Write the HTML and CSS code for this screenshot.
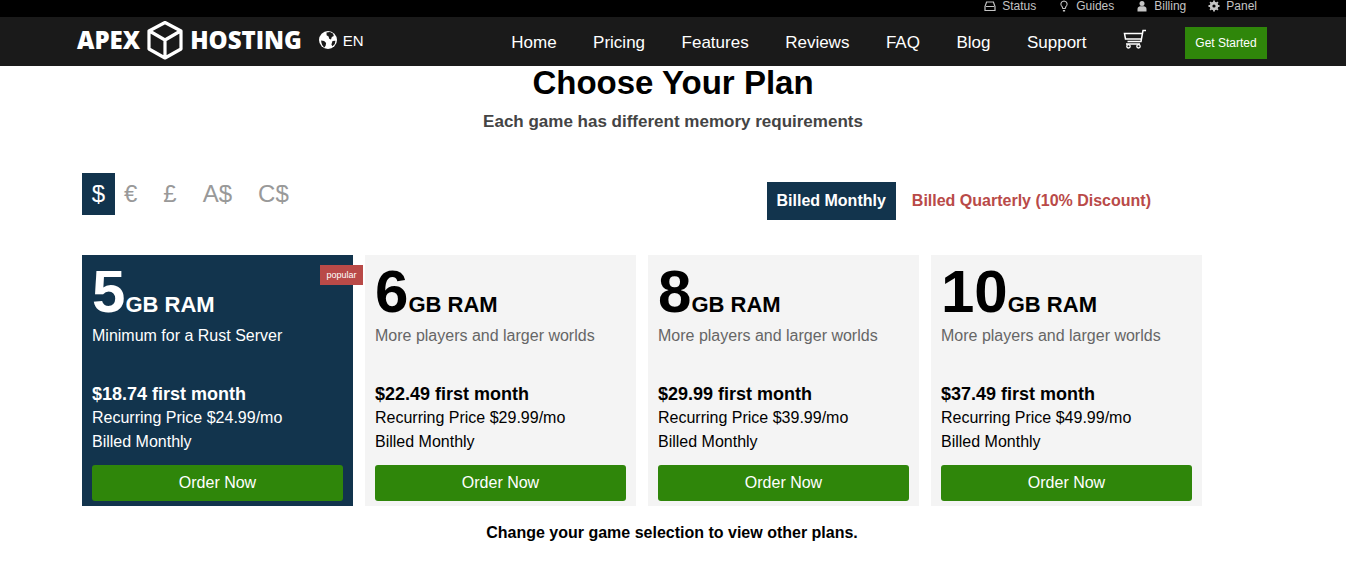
FILE: index.html
```html
<!DOCTYPE html>
<html lang="en">
<head>
<meta charset="utf-8">
<title>Apex Hosting</title>
<link rel="stylesheet" href="styles.css">
</head>
<body>
<div class="topbar">
  <a class="top-link"><svg class="top-icon" viewBox="0 0 12 12"><path d="M2.6 2h6.8l1.6 4.6V10.500H1V6.600z M2 6.500h8" fill="none" stroke="#c4c4c4" stroke-width="1.200"/></svg>Status</a>
  <a class="top-link"><svg class="top-icon" viewBox="0 0 12 12"><path d="M6 1a3.200 3.200 0 0 0-1.800 5.800L4.800 8.500h2.400l.6-1.700A3.200 3.200 0 0 0 6 1z" fill="none" stroke="#c4c4c4" stroke-width="1.100"/><path d="M4.900 10h2.200v1.500H4.900z" fill="#c4c4c4"/></svg>Guides</a>
  <a class="top-link"><svg class="top-icon" viewBox="0 0 12 12"><circle cx="6" cy="3.400" r="2.500" fill="#c4c4c4"/><path d="M1.500 11.500V9c0-1.800 1.500-2.800 2.800-2.800h3.400c1.300 0 2.800 1 2.800 2.800v2.500z" fill="#c4c4c4"/></svg>Billing</a>
  <a class="top-link"><svg class="top-icon" viewBox="0 0 12 12"><circle cx="6" cy="6" r="3.200" fill="none" stroke="#c4c4c4" stroke-width="2.200"/><path d="M6 .5v11M.5 6h11M2.100 2.100l7.800 7.800M9.900 2.100l-7.800 7.800" stroke="#c4c4c4" stroke-width="1.800"/><circle cx="6" cy="6" r="1.600" fill="#000"/></svg>Panel</a>
</div>
<header class="nav">
  <div class="brand">
    <span class="brand-word">APEX</span>
    <svg class="cube" viewBox="0 0 38 40"><path d="M19 2.500 35 11v18l-16 9-16-9V11z M3.500 11 19 20 34.500 11 M19 20v18" fill="none" stroke="#fff" stroke-width="3.200" stroke-linejoin="round"/></svg>
    <span class="brand-word">HOSTING</span>
    <svg class="globe" viewBox="0 0 18 18"><circle cx="9" cy="9" r="9" fill="#fff"/><path d="M7.500 1.500 11 .9l3 1.600.8 2.600-2 1-.8 2.300-1.800-.7-.6-2.200L7.600 4.300zM2.100 9.500l3 .6 2 1.800-.4 2.600-1.300 2C3.500 15.300 2.300 12.500 2.100 9.500zM13.500 10l2.900-.2-.6 3.200-2.400 2.200-1-1.800z" fill="#1a1a1a"/></svg>
    <span class="lang">EN</span>
  </div>
  <nav class="menu">
    <a>Home</a><a>Pricing</a><a>Features</a><a>Reviews</a><a>FAQ</a><a>Blog</a><a>Support</a>
    <svg class="cart" viewBox="0 0 24 20"><path d="M23 1.500h-3L18 12.500H4.500 M19.500 4.500H1.500L2.500 10h15.500 M3 15h14" fill="none" stroke="#fff" stroke-width="1.500"/><circle cx="5.500" cy="17.300" r="1.700" fill="none" stroke="#fff" stroke-width="1.300"/><circle cx="15.500" cy="17.300" r="1.700" fill="none" stroke="#fff" stroke-width="1.300"/></svg>
    <a class="started">Get Started</a>
  </nav>
</header>
<main>
  <h1>Choose Your Plan</h1>
  <p class="subtitle">Each game has different memory requirements</p>
  <div class="controls">
    <div class="currency">
      <span class="cur active">$</span><span class="cur">€</span><span class="cur">£</span><span class="cur">A$</span><span class="cur">C$</span>
    </div>
    <div class="billing">
      <span class="bill-active">Billed Monthly</span>
      <span class="bill-other">Billed Quarterly (10% Discount)</span>
    </div>
  </div>
  <div class="plans">
    <article class="plan featured">
      <span class="badge">popular</span>
      <div class="ram"><b>5</b><span>GB RAM</span></div>
      <p class="desc">Minimum for a Rust Server</p>
      <p class="first">$18.74 first month</p>
      <p class="line">Recurring Price $24.99/mo</p>
      <p class="line">Billed Monthly</p>
      <a class="order">Order Now</a>
    </article>
    <article class="plan">
      <div class="ram"><b>6</b><span>GB RAM</span></div>
      <p class="desc">More players and larger worlds</p>
      <p class="first">$22.49 first month</p>
      <p class="line">Recurring Price $29.99/mo</p>
      <p class="line">Billed Monthly</p>
      <a class="order">Order Now</a>
    </article>
    <article class="plan">
      <div class="ram"><b>8</b><span>GB RAM</span></div>
      <p class="desc">More players and larger worlds</p>
      <p class="first">$29.99 first month</p>
      <p class="line">Recurring Price $39.99/mo</p>
      <p class="line">Billed Monthly</p>
      <a class="order">Order Now</a>
    </article>
    <article class="plan">
      <div class="ram"><b>10</b><span>GB RAM</span></div>
      <p class="desc">More players and larger worlds</p>
      <p class="first">$37.49 first month</p>
      <p class="line">Recurring Price $49.99/mo</p>
      <p class="line">Billed Monthly</p>
      <a class="order">Order Now</a>
    </article>
  </div>
  <p class="note">Change your game selection to view other plans.</p>
</main>
</body>
</html>
```
FILE: styles.css
```css
* { box-sizing: border-box; }
html, body { margin: 0; padding: 0; }
body { width: 1346px; height: 575px; overflow: hidden; background: #fff; color: #000; font-family: "Liberation Sans", Arial, sans-serif; }
p, h1 { margin: 0; }

.topbar { height: 17px; background: #000; display: flex; justify-content: flex-end; align-items: center; padding: 0 89px 5px 0; gap: 22px; }
.top-link { display: flex; align-items: center; gap: 6px; color: #c4c4c4; font-size: 12px; line-height: 12px; }
.top-icon { width: 12px; height: 12px; }

.nav { height: 49px; background: #1a1a1a; display: flex; justify-content: space-between; padding: 0 79px 0 77px; }
.brand { display: flex; align-items: center; height: 46px; }
.brand-word { font-family: "Open Sans", sans-serif; font-weight: 800; font-size: 24px; color: #fff; line-height: 46px; }
.cube { width: 38px; height: 40px; margin: 0 6px 0 6px; }
.globe { width: 18px; height: 18px; margin: 0 6px 0 17px; }
.lang { color: #fff; font-size: 15px; }

.menu { display: flex; align-items: center; color: #fff; font-size: 17px; padding-top: 3px; }
.menu a { margin-right: 36.500px; }
.cart { width: 24px; height: 20px; margin: -9px 38px 0 0; }
.menu a.started { margin: 0; width: 82px; height: 32px; background: #2f860a; color: #fff; font-size: 12px; display: flex; align-items: center; justify-content: center; margin-top: -1px; }

h1 { font-size: 33px; line-height: 34px; text-align: center; margin-top: 0; }
.subtitle { font-size: 17px; font-weight: bold; color: #444; text-align: center; margin-top: 12px; line-height: 20px; }

.controls { display: flex; justify-content: space-between; padding: 0 195px 0 82px; margin-top: 41px; height: 82px; }
.currency { display: flex; height: 42px; font-size: 24px; color: #999; }
.cur { display: flex; align-items: center; justify-content: center; padding: 0 9px; margin-right: 8px; }
.cur.active { background: #12344d; color: #fff; width: 33px; padding: 0; margin-right: 0; }
.billing { display: flex; align-items: center; height: 38px; margin-top: 9px; font-size: 16px; font-weight: bold; }
.bill-active { background: #12344d; color: #fff; height: 38px; padding: 0 10px; display: flex; align-items: center; }
.bill-other { color: #b94a48; margin-left: 16px; }

.plans { display: flex; gap: 12px; padding-left: 82px; }
.plan { position: relative; width: 271px; height: 251px; background: #f4f4f4; padding: 0 10px; display: flex; flex-direction: column; color: #000; }
.plan.featured { background: #12344d; color: #fff; }
.badge { position: absolute; top: 10px; right: -10px; width: 43px; height: 20px; background: #b94a48; color: #fff; font-size: 9px; display: flex; align-items: center; justify-content: center; }
.ram { height: 63px; margin-top: 5px; display: flex; align-items: baseline; }
.ram b { font-size: 60px; line-height: 63px; }
.ram span { font-size: 22px; font-weight: bold; }
.desc { font-size: 16px; line-height: 20px; color: #666; margin-top: 3px; }
.featured .desc { color: #fff; }
.first { font-size: 18px; font-weight: bold; line-height: 22px; margin-top: 37px; }
.line { font-size: 16px; line-height: 24px; }
.first + .line { margin-top: 1px; }
.order { margin-top: 11px; height: 36px; background: #2f860a; border-radius: 3px; color: #fff; font-size: 16px; display: flex; align-items: center; justify-content: center; }

.note { font-size: 16px; font-weight: bold; text-align: center; margin-top: 17px; line-height: 20px; padding-right: 2px; }
```
